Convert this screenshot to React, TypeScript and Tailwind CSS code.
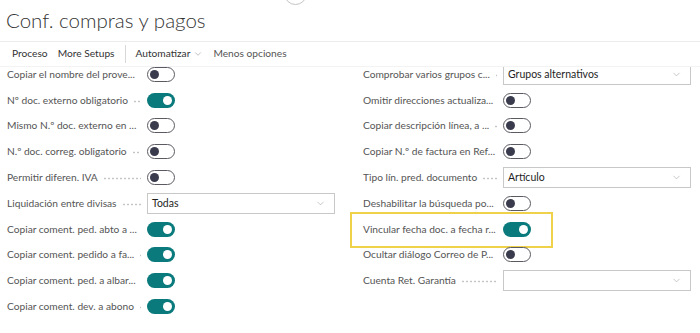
import { ChevronDown } from 'lucide-react';

type Field =
    | { label: string; kind: 'toggle'; on: boolean; highlight?: boolean }
    | { label: string; kind: 'select'; value: string };

const leftFields: Field[] = [
    { label: 'Copiar el nombre del prove...', kind: 'toggle', on: false },
    { label: 'Nº doc. externo obligatorio', kind: 'toggle', on: true },
    { label: 'Mismo N.º doc. externo en ...', kind: 'toggle', on: false },
    { label: 'N.º doc. correg. obligatorio', kind: 'toggle', on: false },
    { label: 'Permitir diferen. IVA', kind: 'toggle', on: false },
    { label: 'Liquidación entre divisas', kind: 'select', value: 'Todas' },
    { label: 'Copiar coment. ped. abto a ...', kind: 'toggle', on: true },
    { label: 'Copiar coment. pedido a fa...', kind: 'toggle', on: true },
    { label: 'Copiar coment. ped. a albar...', kind: 'toggle', on: true },
    { label: 'Copiar coment. dev. a abono', kind: 'toggle', on: true },
];

const rightFields: Field[] = [
    { label: 'Comprobar varios grupos c...', kind: 'select', value: 'Grupos alternativos' },
    { label: 'Omitir direcciones actualiza...', kind: 'toggle', on: false },
    { label: 'Copiar descripción línea, a ...', kind: 'toggle', on: false },
    { label: 'Copiar N.º de factura en Ref...', kind: 'toggle', on: false },
    { label: 'Tipo lín. pred. documento', kind: 'select', value: 'Artículo' },
    { label: 'Deshabilitar la búsqueda po...', kind: 'toggle', on: false },
    { label: 'Vincular fecha doc. a fecha r...', kind: 'toggle', on: true, highlight: true },
    { label: 'Ocultar diálogo Correo de P...', kind: 'toggle', on: false },
    { label: 'Cuenta Ret. Garantía', kind: 'select', value: '' },
];

function Toggle({ on }: { on: boolean }) {
    return on ? (
        <div className="w-[28px] h-[15px] rounded-full bg-[#0b7a7c] flex items-center justify-end pr-[3px]">
            <div className="w-[9px] h-[9px] rounded-full bg-white" />
        </div>
    ) : (
        <div className="w-[28px] h-[15px] rounded-full bg-white border border-[#5a5a62] flex items-center pl-[2px]">
            <div className="w-[9px] h-[9px] rounded-full bg-[#3a3b4d]" />
        </div>
    );
}

function Select({ value }: { value: string }) {
    return (
        <div className="w-[188px] h-[21px] border border-[#c8c8c8] bg-white flex items-center justify-between pl-[4px] pr-[8px]">
            <span className="text-[10.5px] text-[#1e1e1e]">{value}</span>
            <ChevronDown className="w-[11px] h-[11px] text-[#a0a0a0]" strokeWidth={1.25} />
        </div>
    );
}

function Row({ field }: { field: Field }) {
    return (
        <div className="relative h-[25.8px] flex items-center">
            {field.kind === 'toggle' && field.highlight && (
                <div className="absolute left-[-13px] top-[-4px] w-[203px] h-[36px] border-2 border-[#f0d24a]" />
            )}
            <div className="w-[140px] flex items-center pr-[6px]">
                <span className="text-[10.2px] text-[#555] whitespace-nowrap shrink-0">{field.label}</span>
                <span className="flex-1 ml-[5px] mt-[2px] h-[3px] bg-[radial-gradient(circle,#c4c4c4_0.8px,transparent_1.2px)] bg-[length:4px_3px] bg-repeat-x" />
            </div>
            {field.kind === 'toggle' ? <Toggle on={field.on} /> : <Select value={field.value} />}
        </div>
    );
}

export default function App() {
    return (
        <div className="relative w-[700px] h-[333px] overflow-hidden bg-white font-['Lato',sans-serif]">
            <div className="absolute left-[284px] top-[-18px] w-[23px] h-[23px] rounded-full border border-[#c4c4c4]" />
            <div className="h-[42px] border-b border-[#ececec] pl-[6px] pt-[5px]">
                <h1 className="text-[20.5px] font-light text-[#333] leading-[30px]">Conf. compras y pagos</h1>
            </div>
            <div className="h-[25px] flex items-center pl-[12px] text-[10.2px] text-[#333] border-b border-[#f3f3f3]">
                <span>Proceso</span>
                <span className="ml-[10px]">More Setups</span>
                <span className="ml-[10px] w-px h-[18px] bg-[#d8d8d8]" />
                <span className="ml-[10px]">Automatizar</span>
                <ChevronDown className="ml-[3px] w-[10px] h-[10px] text-[#8a8a8a]" strokeWidth={1.25} />
                <span className="ml-[10px] text-[#555]">Menos opciones</span>
            </div>
            <div className="h-[266px] overflow-hidden">
                <div className="-mt-[5.5px] flex pl-[7px]">
                    <div className="w-[328px]">
                        {leftFields.map((f) => (
                            <Row key={f.label} field={f} />
                        ))}
                    </div>
                    <div className="ml-[28px] w-[330px]">
                        {rightFields.map((f) => (
                            <Row key={f.label} field={f} />
                        ))}
                    </div>
                </div>
            </div>
        </div>
    );
}
